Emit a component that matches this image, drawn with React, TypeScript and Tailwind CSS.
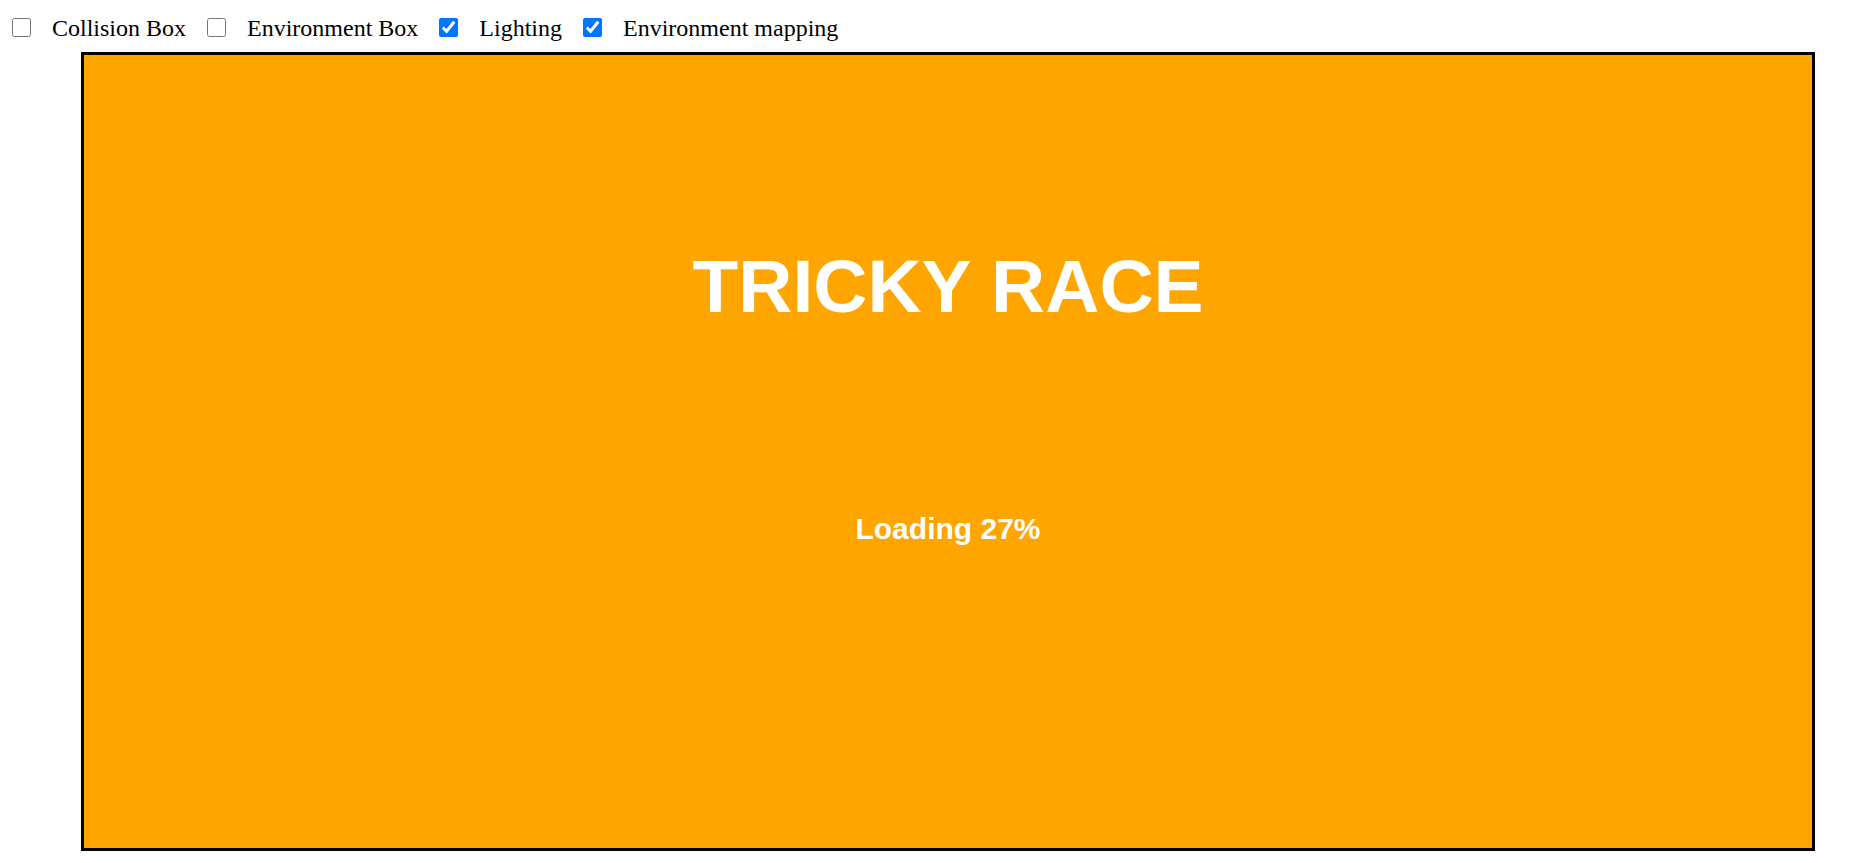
import { useState } from 'react'

type Option = { key: string; label: string; checked: boolean }

const initialOptions: Option[] = [
  { key: 'collision', label: 'Collision Box', checked: false },
  { key: 'envBox', label: 'Environment Box', checked: false },
  { key: 'lighting', label: 'Lighting', checked: true },
  { key: 'envMap', label: 'Environment mapping', checked: true },
]

export default function App() {
  const [options, setOptions] = useState(initialOptions)
  const progress = 27

  const toggle = (key: string) =>
    setOptions((prev) => prev.map((o) => (o.key === key ? { ...o, checked: !o.checked } : o)))

  return (
    <div className="min-h-screen bg-white font-['Liberation_Serif',serif] text-black">
      {/* debug toggles */}
      <div className="flex items-center h-[27px] mt-[15px] pl-[12px] text-[24px] leading-[27px]">
        {options.map((o, i) => (
          <label key={o.key} className={'flex items-center ' + (i > 0 ? 'ml-[21px]' : '')}>
            <input
              type="checkbox"
              checked={o.checked}
              onChange={() => toggle(o.key)}
              className="w-[19px] h-[19px] m-0 mb-[2px] accent-[#0075ff]"
            />
            <span className="ml-[21px] whitespace-nowrap">{o.label}</span>
          </label>
        ))}
      </div>

      {/* game canvas */}
      <div className="ml-[81px] mt-[10px] w-[1734px] h-[799px] border-[3px] border-black bg-[#ffa500] text-white font-['Liberation_Sans',Arial,sans-serif] font-bold text-center">
        <div className="mt-[194px] text-[75px] leading-[75px]">TRICKY RACE</div>
        <div className="mt-[190px] text-[30px] leading-[29px]">Loading {progress}%</div>
      </div>
    </div>
  )
}
